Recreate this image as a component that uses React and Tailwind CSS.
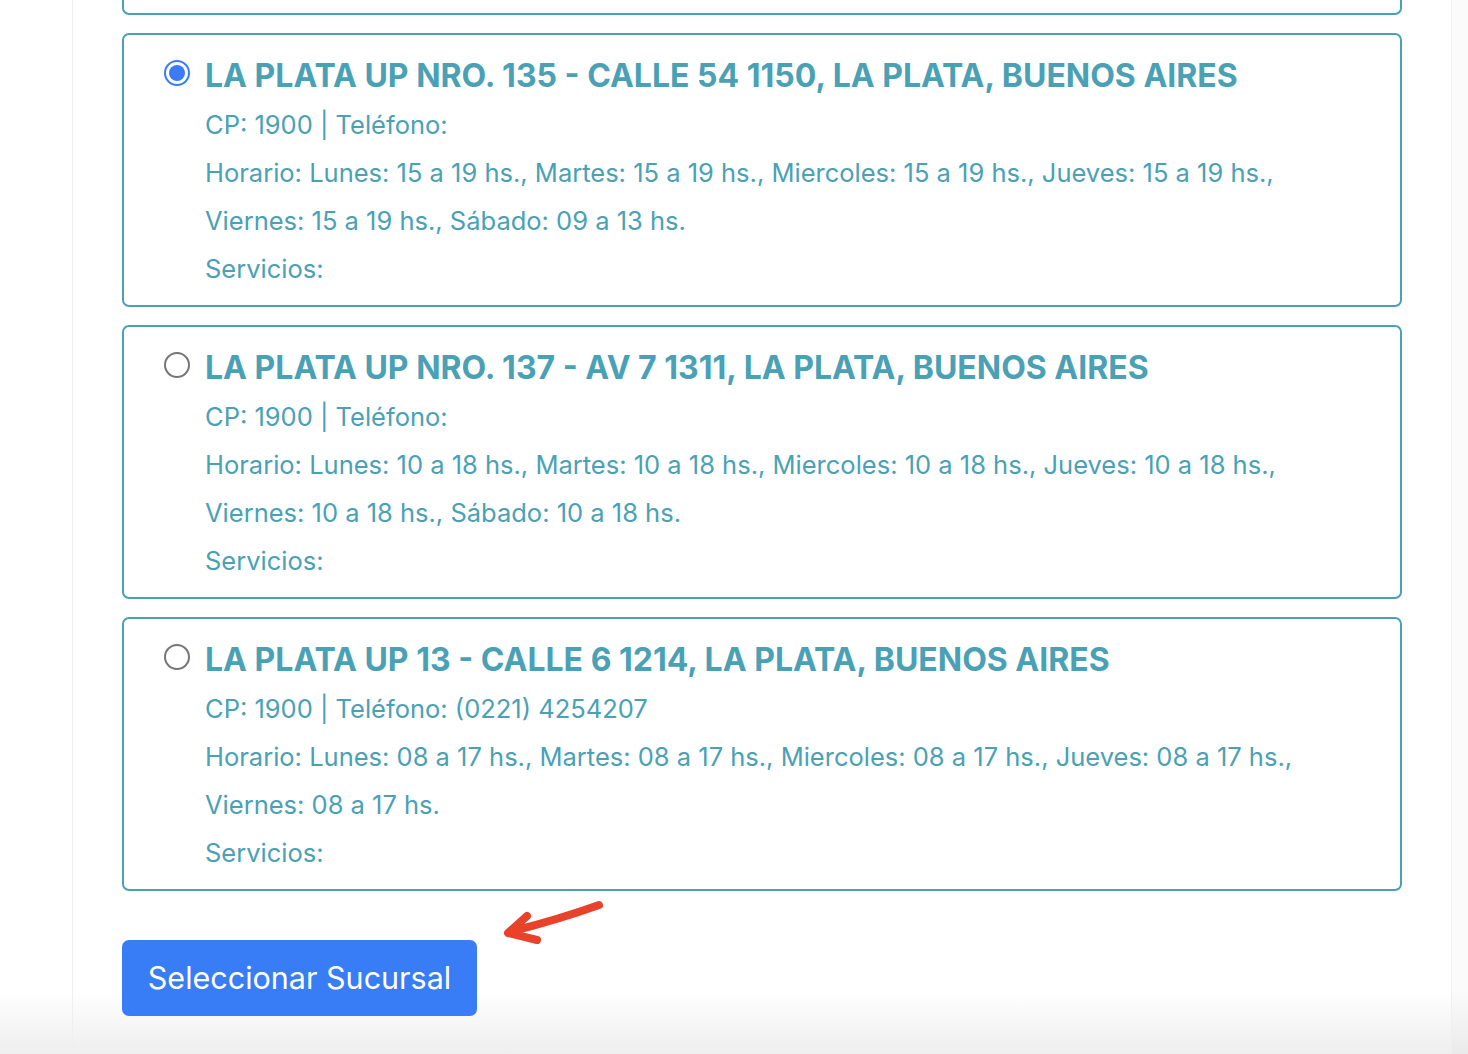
import React from "react";

const branches = [
  {
    title: "LA PLATA UP NRO. 135 - CALLE 54 1150, LA PLATA, BUENOS AIRES",
    cp: "CP: 1900 | Teléfono:",
    h1: "Horario: Lunes: 15 a 19 hs., Martes: 15 a 19 hs., Miercoles: 15 a 19 hs., Jueves: 15 a 19 hs.,",
    h2: "Viernes: 15 a 19 hs., Sábado: 09 a 13 hs.",
    selected: true,
  },
  {
    title: "LA PLATA UP NRO. 137 - AV 7 1311, LA PLATA, BUENOS AIRES",
    cp: "CP: 1900 | Teléfono:",
    h1: "Horario: Lunes: 10 a 18 hs., Martes: 10 a 18 hs., Miercoles: 10 a 18 hs., Jueves: 10 a 18 hs.,",
    h2: "Viernes: 10 a 18 hs., Sábado: 10 a 18 hs.",
    selected: false,
  },
  {
    title: "LA PLATA UP 13 - CALLE 6 1214, LA PLATA, BUENOS AIRES",
    cp: "CP: 1900 | Teléfono: (0221) 4254207",
    h1: "Horario: Lunes: 08 a 17 hs., Martes: 08 a 17 hs., Miercoles: 08 a 17 hs., Jueves: 08 a 17 hs.,",
    h2: "Viernes: 08 a 17 hs.",
    selected: false,
  },
];

function Radio({ selected }) {
  if (selected) {
    return (
      <span className="flex h-[26px] w-[26px] shrink-0 items-center justify-center rounded-full border-2 border-[#3b7cf6] bg-white">
        <span className="h-[16px] w-[16px] rounded-full bg-[#3b7cf6]" />
      </span>
    );
  }
  return <span className="h-[26px] w-[26px] shrink-0 rounded-full border-2 border-[#767676] bg-white" />;
}

function Card({ b }) {
  return (
    <label className="flex w-[1280px] gap-[15px] rounded-[7px] border-2 border-[#4aa1b5] bg-white pb-[12px] pl-[40px] pr-[40px] pt-[21px]">
      <div className="-mt-[1px] flex h-[36px] items-center">
        <Radio selected={b.selected} />
      </div>
      <div className="flex flex-col text-[#4aa1b5]">
        <div className="whitespace-nowrap pt-[2px] text-[32px] font-bold leading-[36px]">{b.title}</div>
        <div className="mt-[7px] flex flex-col text-[25.5px] leading-[48px]">
          <div className="whitespace-nowrap">{b.cp}</div>
          <div className="whitespace-nowrap">{b.h1}</div>
          <div className="whitespace-nowrap">{b.h2}</div>
          <div className="whitespace-nowrap">Servicios:</div>
        </div>
      </div>
    </label>
  );
}

export default function App() {
  return (
    <div
      className="relative h-[1054px] w-[1468px] overflow-hidden bg-white"
      style={{ fontFamily: "Inter, 'Noto Sans', sans-serif" }}
    >
      <div className="pointer-events-none absolute bottom-0 left-0 h-[64px] w-full bg-gradient-to-b from-transparent to-[#eeeeee]" />

      <div className="relative flex h-full">
        <div className="w-[72px] shrink-0" />
        <div className="flex w-[1380px] shrink-0 flex-col gap-[18px] border-x border-[#efefef] px-[49px]">
          <div className="-mt-[259px] h-[274px] w-[1280px] shrink-0 rounded-[7px] border-2 border-[#4aa1b5] bg-white" />
          {branches.map((b, i) => (
            <Card key={i} b={b} />
          ))}
          <div className="mt-[31px]">
            <button className="flex h-[76px] w-[355px] items-center justify-center rounded-[7px] bg-[#387cf6] text-[30.5px] text-white">
              Seleccionar Sucursal
            </button>
          </div>
        </div>
        <div className="flex-1 bg-black/[0.015]" />
      </div>

      <svg className="pointer-events-none absolute left-0 top-0" width="1468" height="1054">
        <path
          d="M599 905 Q560 919 513 931"
          fill="none"
          stroke="#e8432a"
          strokeWidth="8"
          strokeLinecap="round"
        />
        <path
          d="M527 916 L508 933 L537 940"
          fill="none"
          stroke="#e8432a"
          strokeWidth="8"
          strokeLinecap="round"
          strokeLinejoin="round"
        />
      </svg>
    </div>
  );
}
